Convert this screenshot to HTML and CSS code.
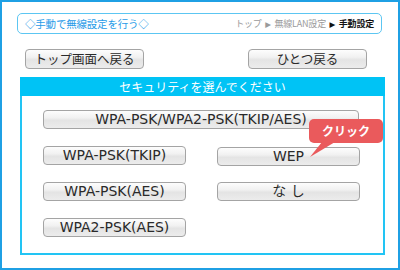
FILE: index.html
```html
<!DOCTYPE html>
<html lang="ja">
<head>
    <meta charset="UTF-8">
    <title>手動で無線設定を行う</title>
    <link rel="stylesheet" href="styles.css">
</head>
<body>
    <div class="frame">
        <div class="title-bar">
            <span class="title">◇手動で無線設定を行う◇</span>
            <span class="crumbs">トップ&nbsp; <span class="arrow">▶</span>&nbsp; 無線LAN設定&nbsp; <span class="arrow now">▶</span>&nbsp; <span class="now">手動設定</span></span>
        </div>

        <div class="nav">
            <button class="btn nav-btn">トップ画面へ戻る</button>
            <button class="btn nav-btn">ひとつ戻る</button>
        </div>

        <div class="panel">
            <div class="panel-head">セキュリティを選んでください</div>
            <div class="choices">
                <button class="btn wide">WPA-PSK/WPA2-PSK(TKIP/AES)</button>
                <button class="btn">WPA-PSK(TKIP)</button>
                <div class="cell">
                    <button class="btn">WEP</button>
                    <span class="callout">クリック</span>
                </div>
                <button class="btn">WPA-PSK(AES)</button>
                <button class="btn">な し</button>
                <button class="btn">WPA2-PSK(AES)</button>
            </div>
        </div>
    </div>
</body>
</html>
```
FILE: styles.css
```css
body {
    margin: 0;
    font-family: "DejaVu Sans", "Noto Sans CJK JP", sans-serif;
    background: #fff;
}
.frame {
    box-sizing: border-box;
    width: 400px;
    height: 270px;
    border: 2px solid #1fa0e4;
    padding: 11px 0 0 15px;
}
.title-bar {
    box-sizing: border-box;
    width: 365px;
    height: 21px;
    border: 1px solid #5cc6f2;
    border-radius: 5px;
    display: flex;
    align-items: center;
    justify-content: space-between;
    padding: 0 7px 0 7px;
}
.title {
    font-family: "Noto Sans CJK JP", sans-serif;
    font-size: 10.5px;
    color: #1f9be8;
    letter-spacing: -0.2px;
}
.crumbs {
    font-family: "Noto Sans CJK JP", sans-serif;
    font-size: 9px;
    color: #9a9a9a;
    letter-spacing: -0.2px;
}
.arrow {
    font-family: "DejaVu Sans", sans-serif;
    font-size: 7.5px;
}
.now {
    color: #111;
    font-weight: bold;
}
.nav {
    display: flex;
    justify-content: space-between;
    width: 342px;
    margin: 15px 0 0 8px;
}
.btn {
    box-sizing: border-box;
    height: 19px;
    margin: 0;
    padding: 0;
    border: 1px solid #a4a4a4;
    border-radius: 4px;
    background: linear-gradient(to bottom, #fdfdfd 0%, #f1f1f1 40%, #e4e4e4 55%, #ececec 100%);
    color: #2a2a2a;
    font-family: "DejaVu Sans", "Noto Sans CJK JP", sans-serif;
    font-size: 14px;
    line-height: 17px;
    width: 143px;
    cursor: pointer;
}
.nav-btn {
    width: 119px;
    height: 20px;
    font-size: 12.5px;
}
.panel {
    box-sizing: border-box;
    width: 365px;
    height: 178px;
    margin: 8px 0 0 3px;
    border: 2px solid #22c4f4;
    border-top: 0;
}
.panel-head {
    height: 19px;
    margin: 0 -2px;
    background: #00c3f5;
    color: #fff;
    font-family: "Noto Sans CJK JP", sans-serif;
    font-size: 12px;
    line-height: 19px;
    text-align: center;
}
.choices {
    display: grid;
    grid-template-columns: 143px 143px;
    column-gap: 31px;
    row-gap: 17px;
    padding: 14px 0 0 21px;
}
.wide {
    grid-column: 1 / 3;
    width: 316px;
}
.cell {
    position: relative;
    height: 19px;
}
.callout {
    position: absolute;
    left: 92px;
    top: -27px;
    width: 74px;
    height: 24px;
    border-radius: 5px;
    background: #ea5a5c;
    color: #fff;
    font-family: "Noto Sans CJK JP", sans-serif;
    font-size: 12px;
    font-weight: bold;
    line-height: 24px;
    text-align: center;
}
.callout::after {
    content: "";
    position: absolute;
    left: 0;
    top: 23px;
    width: 28px;
    height: 15px;
    background: #ea5a5c;
    clip-path: polygon(13px 0, 26px 0, 1px 100%);
}
```
